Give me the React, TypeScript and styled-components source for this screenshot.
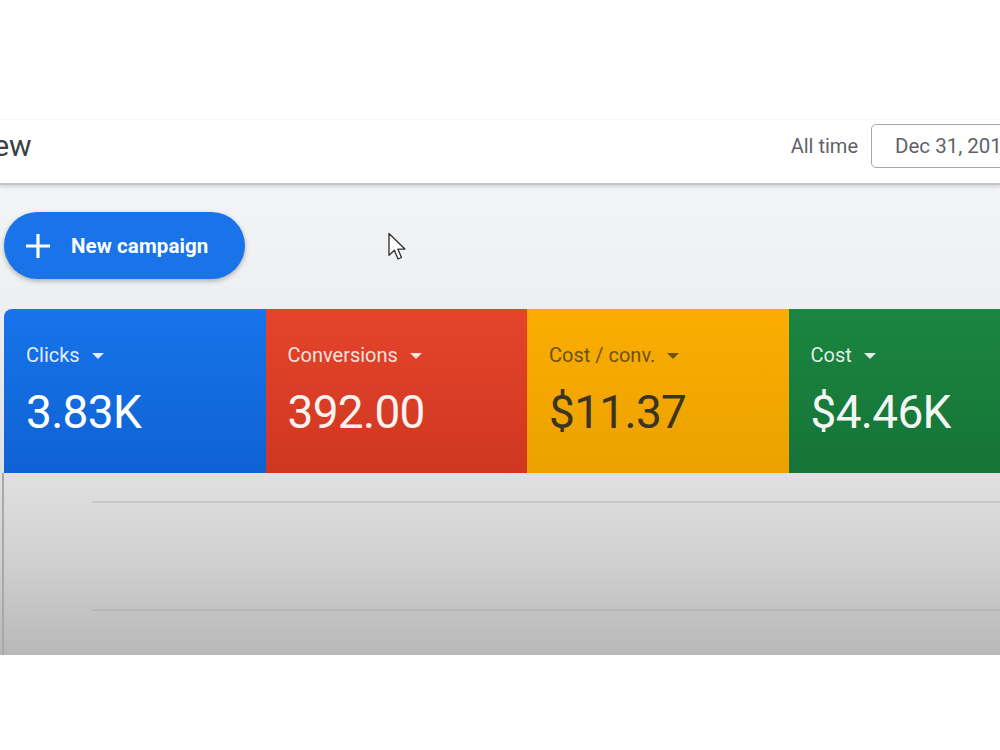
import React from "react";
import styled, { createGlobalStyle } from "styled-components";

const Global = createGlobalStyle`
  html, body { margin: 0; padding: 0; background: #ffffff; }
  body { font-family: Roboto, "Liberation Sans", sans-serif; }
  * { box-sizing: border-box; }
`;

const Screen = styled.div`
  width: 1000px;
  height: 750px;
  overflow: hidden;
  display: flex;
  flex-direction: column;
  background: #ffffff;
`;

const TopSpace = styled.div`
  height: 120px;
  flex: 0 0 auto;
  border-bottom: 1px solid #f7f7f7;
`;

const Header = styled.header`
  height: 65px;
  flex: 0 0 auto;
  display: flex;
  align-items: flex-start;
  padding-top: 4px;
  border-bottom: 2px solid #c3c3c3;
  box-shadow: 0 2px 3px rgba(0, 0, 0, 0.12);
  position: relative;
  z-index: 1;
  background: #ffffff;
`;

const Title = styled.h1`
  margin: 0 0 0 -90px;
  font-size: 30px;
  font-weight: 400;
  line-height: 44px;
  color: #3c4043;
  white-space: nowrap;
`;

const Spacer = styled.div`
  flex: 1;
`;

const RangeLabel = styled.span`
  font-size: 20px;
  line-height: 44px;
  color: #5f6368;
  margin-right: 13px;
  white-space: nowrap;
`;

const DateBox = styled.div`
  width: 160px;
  height: 44px;
  margin-right: -31px;
  flex: 0 0 auto;
  border: 1px solid #a5a8ab;
  border-radius: 5px;
  padding-left: 23px;
  font-size: 20.5px;
  line-height: 42px;
  color: #5f6368;
  white-space: nowrap;
  overflow: hidden;
`;

const Main = styled.main`
  height: 470px;
  flex: 0 0 auto;
  display: flex;
  flex-direction: column;
  padding-left: 2px;
  background: linear-gradient(
    to bottom,
    #f3f4f5 0px,
    #eeeff0 120px,
    #dfdfdf 295px,
    #cfcfcf 380px,
    #b8b8b8 470px
  );
`;

const ButtonRow = styled.div`
  position: relative;
  height: 124px;
  padding: 27px 0 0 2px;
`;

const NewButton = styled.button`
  width: 241px;
  height: 67px;
  border: none;
  border-radius: 34px;
  background: #1a73e8;
  box-shadow: 0 2px 5px rgba(0, 0, 0, 0.28);
  display: flex;
  align-items: center;
  gap: 20px;
  padding: 0 0 0 21px;
  color: #ffffff;
  font-family: Roboto, "Liberation Sans", sans-serif;
  font-size: 20.5px;
  font-weight: 700;
  letter-spacing: 0.1px;
  cursor: pointer;
`;

const Cursor = styled.svg`
  position: absolute;
  left: 385px;
  top: 47px;
`;

const Cards = styled.div`
  display: flex;
  height: 164px;
  margin-left: 2px;
  flex: 0 0 auto;
`;

const Card = styled.div<{ $bg: string; $bg2: string; $fg: string; $label: string; $first?: boolean }>`
  flex: 0 0 261.5px;
  height: 164px;
  padding: 34px 22px 0 22px;
  background: linear-gradient(to bottom, ${(p) => p.$bg}, ${(p) => p.$bg2});
  color: ${(p) => p.$fg};
  border-top-left-radius: ${(p) => (p.$first ? "8px" : "0")};
  --label: ${(p) => p.$label};
`;

const LabelRow = styled.div`
  display: flex;
  align-items: center;
  gap: 12px;
  height: 24px;
  font-size: 20px;
  line-height: 24px;
  color: var(--label);
`;

const Caret = styled.span`
  width: 0;
  height: 0;
  border-left: 6.5px solid transparent;
  border-right: 6.5px solid transparent;
  border-top: 6.5px solid var(--label);
  margin-top: 2px;
`;

const Value = styled.div`
  margin-top: 18px;
  font-size: 46px;
  line-height: 54px;
  font-weight: 400;
  letter-spacing: -0.7px;
`;

const ChartPanel = styled.div`
  flex: 1;
  border-left: 2px solid #a9a9a9;
  display: flex;
  flex-direction: column;
  padding: 28px 0 0 88px;
`;

const GridLine = styled.div<{ $gap: number }>`
  height: 2px;
  margin-top: ${(p) => p.$gap}px;
  background: rgba(150, 150, 150, 0.28);
`;

const BottomSpace = styled.div`
  flex: 1;
  background: #ffffff;
`;

const metrics = [
  { label: "Clicks", value: "3.83K", bg: "#1774ea", bg2: "#0f62d3", fg: "#ffffff", lab: "rgba(255,255,255,0.88)", first: true },
  { label: "Conversions", value: "392.00", bg: "#e5442b", bg2: "#cf3720", fg: "#f7f1ef", lab: "rgba(255,255,255,0.86)" },
  { label: "Cost / conv.", value: "$11.37", bg: "#fbad00", bg2: "#eca100", fg: "#3b3422", lab: "#6b5310" },
  { label: "Cost", value: "$4.46K", bg: "#1b8541", bg2: "#157436", fg: "#f3f7f3", lab: "rgba(255,255,255,0.88)" },
];

export default function App() {
  return (
    <>
      <Global />
      <Screen>
        <TopSpace />
        <Header>
          <Title>Overview</Title>
          <Spacer />
          <RangeLabel>All time</RangeLabel>
          <DateBox>Dec 31, 2019</DateBox>
        </Header>
        <Main>
          <ButtonRow>
            <NewButton>
              <svg width="26" height="26" viewBox="0 0 26 26">
                <path d="M13 1v24M1 13h24" stroke="#ffffff" strokeWidth="3.2" strokeLinecap="butt" />
              </svg>
              New campaign
            </NewButton>
            <Cursor width="22" height="30" viewBox="0 0 14 20">
              <path
                d="M1 1 L1 15.5 L4.6 12.2 L7 18 L9.3 17 L6.9 11.4 L11.6 11.4 Z"
                fill="#ffffff"
                stroke="#333333"
                strokeWidth="0.9"
                strokeLinejoin="round"
              />
            </Cursor>
          </ButtonRow>
          <Cards>
            {metrics.map((m) => (
              <Card key={m.label} $bg={m.bg} $bg2={m.bg2} $fg={m.fg} $label={m.lab} $first={m.first}>
                <LabelRow>
                  {m.label}
                  <Caret />
                </LabelRow>
                <Value>{m.value}</Value>
              </Card>
            ))}
          </Cards>
          <ChartPanel>
            <GridLine $gap={0} />
            <GridLine $gap={106} />
          </ChartPanel>
        </Main>
        <BottomSpace />
      </Screen>
    </>
  );
}
